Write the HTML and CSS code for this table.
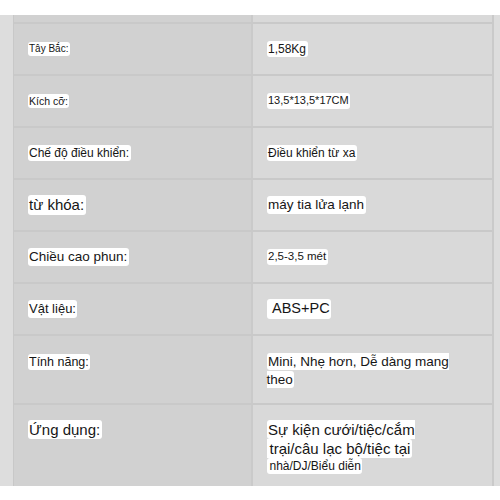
FILE: index.html
```html
<!DOCTYPE html>
<html lang="vi">
<head>
<meta charset="utf-8">
<title>Thông số</title>
<link rel="stylesheet" href="styles.css">
</head>
<body>
<div class="sheet">
  <div class="grid">
    <div class="row stub"><div class="k"></div><div class="v"></div></div>
    <div class="row"><div class="k"><span class="hl f10">Tây Bắc:</span></div><div class="v"><span class="hl f12">1,58Kg</span></div></div>
    <div class="row"><div class="k"><span class="hl f105">Kích cỡ:</span></div><div class="v"><span class="hl f11">13,5*13,5*17CM</span></div></div>
    <div class="row"><div class="k"><span class="hl f12">Chế độ điều khiển:</span></div><div class="v"><span class="hl f12">Điều khiển từ xa</span></div></div>
    <div class="row"><div class="k"><span class="hl f15">từ khóa:</span></div><div class="v"><span class="hl f135">máy tia lửa lạnh</span></div></div>
    <div class="row"><div class="k"><span class="hl f135">Chiều cao phun:</span></div><div class="v"><span class="hl f115">2,5-3,5 mét</span></div></div>
    <div class="row"><div class="k"><span class="hl f13">Vật liệu:</span></div><div class="v"><span class="hl f145">&nbsp;ABS+PC</span></div></div>
    <div class="row tall">
      <div class="k top"><div class="lh17"><span class="hl f125">Tính năng:</span></div></div>
      <div class="v top"><div class="lh17"><span class="hl f135">Mini, Nhẹ hơn, Dễ dàng mang<br>theo</span></div></div>
    </div>
    <div class="row last">
      <div class="k top"><div class="lh19"><span class="hl f15">Ứng dụng:</span></div></div>
      <div class="v top">
        <div class="lh19"><span class="hl f15">Sự kiện cưới/tiệc/cắm<br><span class="ind">trại/câu lạc bộ/tiệc tại</span></span></div>
        <div class="lh14"><span class="hl f12 ind">nhà/DJ/Biểu diễn</span></div>
      </div>
    </div>
  </div>
</div>
</body>
</html>
```

FILE: styles.css
```css
html, body {
  margin: 0;
  padding: 0;
  background: #ffffff;
}

body {
  font-family: "Liberation Sans", Arial, sans-serif;
  color: #161616;
}

.sheet {
  margin-top: 15px;
  height: 471px;
  box-sizing: border-box;
  background: #dddddd;
  padding: 0 6px 0 13px;
}

.grid {
  height: 100%;
  border-left: 1px solid #c8c8c8;
  border-right: 2px solid #cacaca;
  overflow: hidden;
}

.row {
  display: grid;
  grid-template-columns: 239px 1fr;
  height: 52px;
  box-sizing: border-box;
  border-top: 2px solid #c9c9c9;
}

.row.stub {
  height: 7px;
  border-top: 0;
}

.row.tall {
  height: 69px;
}

.row.last {
  height: 83px;
}

.k, .v {
  display: flex;
  flex-direction: column;
  justify-content: center;
  align-items: flex-start;
  box-sizing: border-box;
  padding-left: 13.5px;
}

.k {
  background: #d1d1d1;
  border-right: 2px solid #cacaca;
}

.v {
  background: #d9d9d9;
}

.k.top, .v.top {
  justify-content: flex-start;
  padding-top: 16px;
}

.row.last .k.top, .row.last .v.top {
  padding-top: 15px;
}

.hl {
  background: #ffffff;
  border-radius: 3px;
  padding: 1px 1.5px;
  line-height: 1.2;
}

.ind {
  padding-left: 3px;
}

.lh17, .lh17 .hl { line-height: 17px; }
.lh19, .lh19 .hl { line-height: 19px; }
.lh14, .lh14 .hl { line-height: 14px; }

.f10 { font-size: 10px; }
.f105 { font-size: 10.5px; }
.f11 { font-size: 11px; }
.f115 { font-size: 11.5px; }
.f12 { font-size: 12px; }
.f125 { font-size: 12.5px; }
.f13 { font-size: 13px; }
.f135 { font-size: 13.5px; }
.f145 { font-size: 14.5px; }
.f15 { font-size: 15px; }
```
